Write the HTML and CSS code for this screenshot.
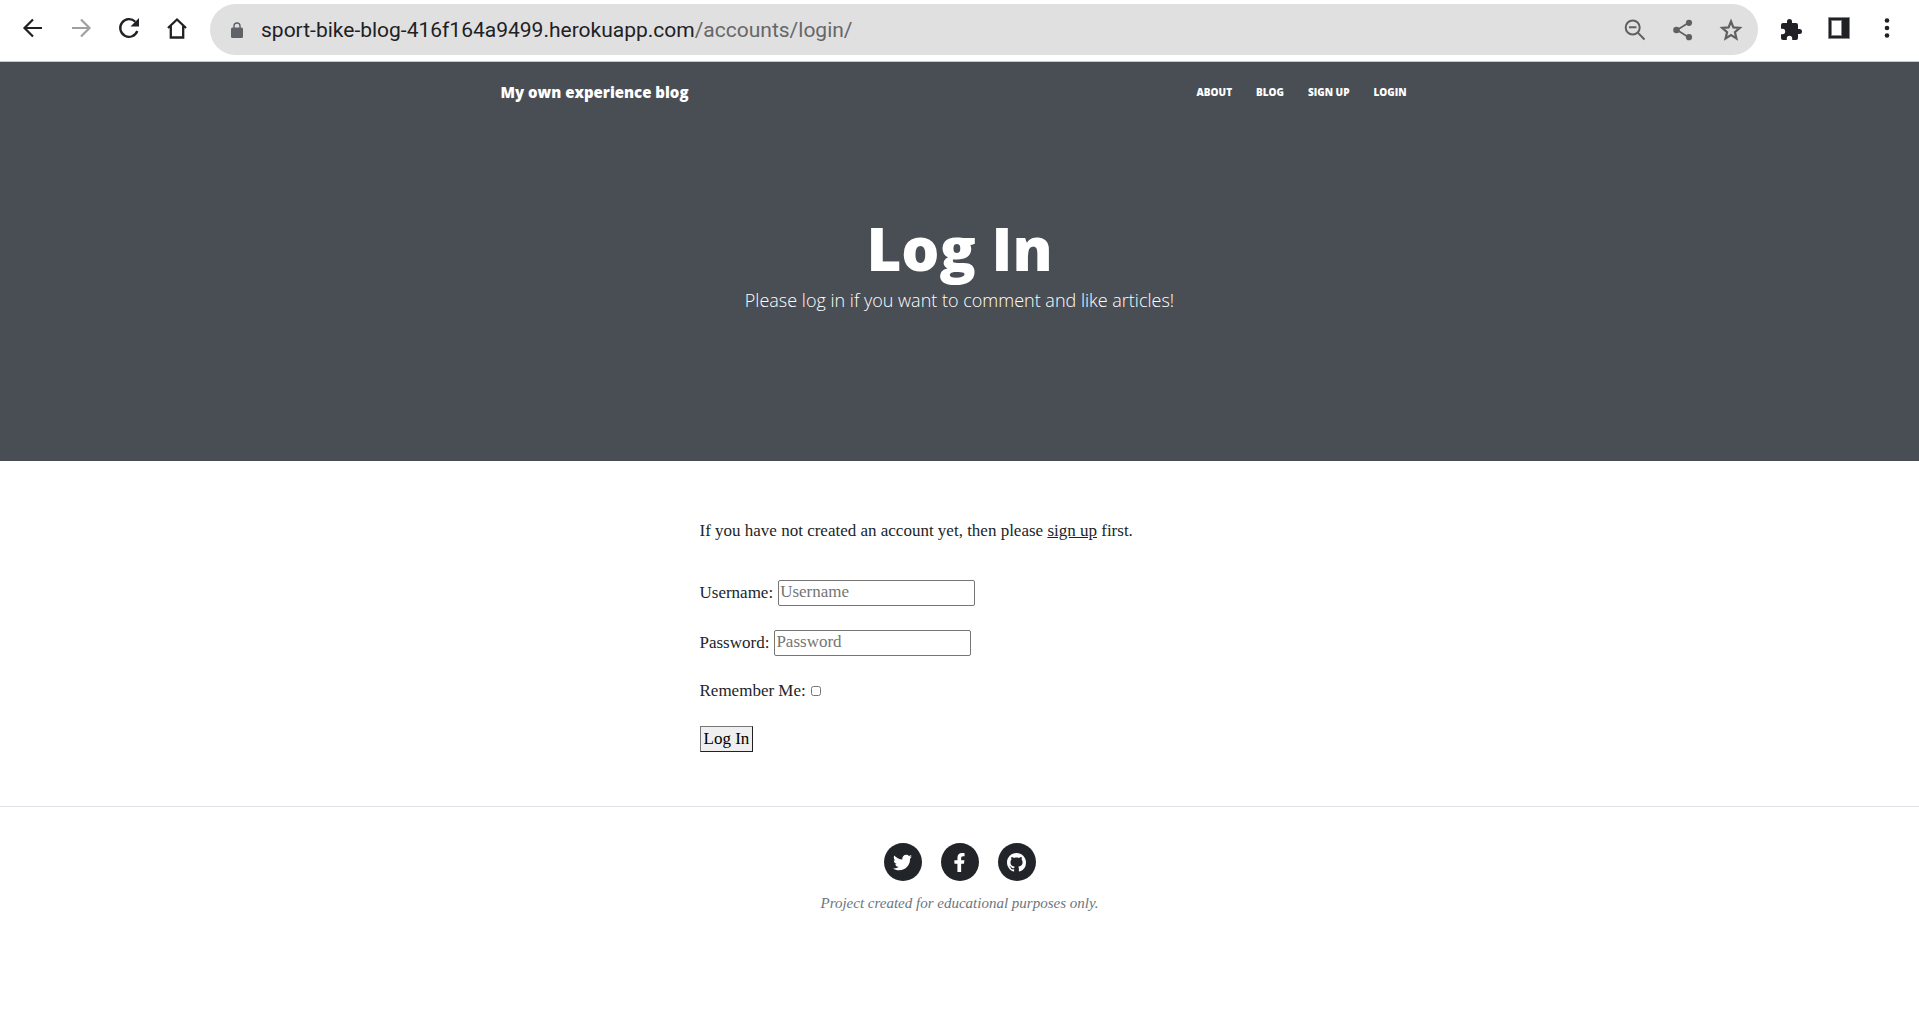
FILE: index.html
```html
<!DOCTYPE html>
<html lang="en">
<head>
<meta charset="utf-8">
<meta name="viewport" content="width=device-width, initial-scale=1">
<title>My own experience blog - Log In</title>
<link rel="stylesheet" href="styles.css">
</head>
<body>
<div class="toolbar">
  <button class="tool" aria-label="Back"><svg viewBox="0 0 24 24"><path d="M21 12H4M12 3.500 3.500 12l8.500 8.500" fill="none" stroke="currentColor" stroke-width="2.200"/></svg></button>
  <button class="tool tool-off" aria-label="Forward" disabled><svg viewBox="0 0 24 24"><path d="M3 12h17M12 3.500 20.500 12 12 20.500" fill="none" stroke="currentColor" stroke-width="2.200"/></svg></button>
  <button class="tool" aria-label="Reload"><svg viewBox="0 0 24 24"><path d="M20.300 15a8.800 8.800 0 1 1-2-9.200" fill="none" stroke="currentColor" stroke-width="2.300"/><path d="M22 2v8.500h-8.500z" fill="currentColor"/></svg></button>
  <button class="tool" aria-label="Home"><svg viewBox="0 0 24 24"><path d="M3 12 12 3.500 21 12M5.800 10v11.500h12.400V10" fill="none" stroke="currentColor" stroke-width="2.300"/></svg></button>
  <div class="address">
    <svg class="lock" viewBox="0 0 12 16" aria-hidden="true"><path d="M3 7V4a3 3 0 0 1 6 0v3" fill="none" stroke="currentColor" stroke-width="1.400"/><rect y="5.500" width="12" height="10.500" rx="1.500" fill="currentColor"/></svg>
    <span class="url">sport-bike-blog-416f164a9499.herokuapp.com<span class="path">/accounts/login/</span></span>
    <button class="tool tool-soft" aria-label="Zoom"><svg viewBox="0 0 24 24"><g fill="none" stroke="currentColor" stroke-width="2"><circle cx="9.700" cy="9.500" r="7"/><path d="m14.800 14.600 6.700 6.900M6 9.300h7.500"/></g></svg></button>
    <button class="tool tool-soft" aria-label="Share"><svg viewBox="0 0 24 24"><path d="M18 4.500 6 12l12 7.500" fill="none" stroke="currentColor" stroke-width="1.700"/><g fill="currentColor"><circle cx="18" cy="4.800" r="3.100"/><circle cx="5.500" cy="12" r="3.300"/><circle cx="18" cy="19.200" r="3.100"/></g></svg></button>
    <button class="tool tool-soft" aria-label="Bookmark"><svg viewBox="0 0 24 24"><path d="m12 3.500 2.400 5.900 6.400.5-4.900 4.200 1.500 6.300-5.400-3.400-5.400 3.400 1.500-6.300-4.900-4.200 6.400-.5z" fill="none" stroke="currentColor" stroke-width="2.200"/></svg></button>
  </div>
  <button class="tool tool-low" aria-label="Extensions"><svg viewBox="0 0 24 24"><path d="M20.500 11H19V7a2 2 0 0 0-2-2h-4V3.500a2.500 2.500 0 0 0-5 0V5H4a2 2 0 0 0-2 2v3.800h1.500a2.700 2.700 0 0 1 0 5.400H2V20a2 2 0 0 0 2 2h3.800v-1.500a2.700 2.700 0 0 1 5.400 0V22H17a2 2 0 0 0 2-2v-4h1.500a2.500 2.500 0 0 0 0-5z" fill="currentColor"/></svg></button>
  <button class="tool" aria-label="Side panel"><svg viewBox="0 0 24 24"><path d="M1.500 1.500h21v21h-21zM4.500 4.500v15h10v-15z" fill="currentColor" fill-rule="evenodd" stroke="#86868a"/></svg></button>
  <button class="tool" aria-label="Menu"><svg viewBox="0 0 24 24"><g fill="currentColor"><circle cx="12" cy="4.500" r="2.300"/><circle cx="12" cy="12" r="2.300"/><circle cx="12" cy="19.500" r="2.300"/></g></svg></button>
</div>

<header class="masthead">
  <nav class="nav">
    <a class="brand" href="#">My own experience blog</a>
    <ul class="links">
      <li><a href="#">About</a></li>
      <li><a href="#">Blog</a></li>
      <li><a href="#">Sign up</a></li>
      <li><a href="#">Login</a></li>
    </ul>
  </nav>
  <div class="heading">
    <h1>Log In</h1>
    <p>Please log in if you want to comment and like articles!</p>
  </div>
</header>

<main class="content">
  <p class="intro">If you have not created an account yet, then please <a href="#">sign up</a> first.</p>
  <form class="login">
    <div class="field"><label for="username">Username:</label><input class="text" id="username" type="text" placeholder="Username"></div>
    <div class="field"><label for="password">Password:</label><input class="text" id="password" type="password" placeholder="Password"></div>
    <div class="field"><label for="remember">Remember Me:</label><input class="check" id="remember" type="checkbox"></div>
    <button class="submit" type="submit">Log In</button>
  </form>
</main>

<footer class="footer">
  <ul class="social">
    <li><a href="#" aria-label="Twitter"><svg viewBox="0 0 512 512"><path fill="currentColor" d="M459.370 151.716c.325 4.548.325 9.097.325 13.645 0 138.720-105.583 298.558-298.558 298.558-59.452 0-114.680-17.219-161.137-47.106 8.447.974 16.568 1.299 25.340 1.299 49.055 0 94.213-16.568 130.274-44.832-46.132-.975-84.792-31.188-98.112-72.772 6.498.974 12.995 1.624 19.818 1.624 9.421 0 18.843-1.300 27.614-3.573-48.081-9.747-84.143-51.980-84.143-102.985v-1.299c13.969 7.797 30.214 12.670 47.431 13.319-28.264-18.843-46.781-51.005-46.781-87.391 0-19.492 5.197-37.360 14.294-52.954 51.655 63.675 129.300 105.258 216.365 109.807-1.624-7.797-2.599-15.918-2.599-24.040 0-57.828 46.782-104.934 104.934-104.934 30.213 0 57.502 12.670 76.670 33.137 23.715-4.548 46.456-13.320 66.599-25.340-7.798 24.366-24.366 44.833-46.132 57.827 21.117-2.273 41.584-8.122 60.426-16.243-14.292 20.791-32.161 39.308-52.628 54.253z"/></svg></a></li>
    <li><a href="#" aria-label="Facebook"><svg viewBox="0 0 320 512"><path fill="currentColor" d="M279.140 288l14.220-92.660h-88.910v-60.130c0-25.350 12.420-50.060 52.240-50.060h40.420V6.260S260.430 0 225.360 0c-73.220 0-121.080 44.380-121.080 124.720v70.620H22.890V288h81.390v224h100.170V288z"/></svg></a></li>
    <li><a href="#" aria-label="GitHub"><svg viewBox="0 0 16 16"><path fill="currentColor" d="M8 0C3.580 0 0 3.580 0 8c0 3.540 2.290 6.530 5.470 7.590.400.070.550-.170.550-.380 0-.190-.010-.820-.010-1.490-2.010.370-2.530-.490-2.690-.940-.090-.230-.480-.940-.820-1.130-.280-.150-.680-.520-.010-.530.630-.010 1.080.580 1.230.820.720 1.210 1.870.870 2.330.660.070-.520.280-.870.510-1.070-1.780-.200-3.640-.890-3.640-3.950 0-.870.310-1.590.820-2.150-.080-.200-.360-1.020.080-2.120 0 0 .670-.210 2.200.820.640-.180 1.320-.270 2-.270s1.360.090 2 .270c1.530-1.040 2.200-.820 2.200-.820.440 1.100.160 1.920.080 2.120.510.560.820 1.270.820 2.150 0 3.070-1.870 3.750-3.650 3.950.290.250.540.730.540 1.480 0 1.070-.010 1.930-.010 2.200 0 .210.150.460.550.380A8.010 8.010 0 0 0 16 8c0-4.420-3.580-8-8-8z"/></svg></a></li>
  </ul>
  <p class="note">Project created for educational purposes only.</p>
</footer>
</body>
</html>
```
FILE: styles.css
```css
* {
  box-sizing: border-box;
}

body {
  margin: 0;
  background: #fff;
  color: #212529;
  font-family: "Liberation Serif", serif;
  font-size: 17px;
  line-height: 24px;
}

h1, p, ul {
  margin: 0;
  padding: 0;
}

ul {
  display: flex;
  list-style: none;
}

button, input {
  font: inherit;
}

/* Browser toolbar */
.toolbar {
  display: flex;
  align-items: center;
  gap: 24px;
  padding: 4px 20px 6px 21px;
  border-bottom: 1px solid #c4cbcb;
}

.tool {
  display: flex;
  padding: 0 0 3px;
  border: 0;
  background: none;
  color: #202124;
}

.tool svg {
  width: 24px;
  height: 24px;
}

.tool-off {
  color: #a0a0a2;
}

.tool-soft {
  padding: 0;
  color: #5f6062;
}

.tool-low {
  padding: 0;
}

.address {
  display: flex;
  flex: 1;
  align-items: center;
  gap: 24px;
  height: 51px;
  margin: 0 -3px;
  padding: 0 15px 0 21px;
  border-radius: 26px;
  background: #e0e0e0;
}

.lock {
  width: 12px;
  height: 16px;
  color: #5f6368;
}

.url {
  flex: 1;
  margin-left: -6px;
  color: #202124;
  font-family: Roboto, sans-serif;
  font-size: 21px;
}

.path {
  color: #66676a;
}

/* Page header */
.masthead {
  height: 399px;
  background: #494d54;
  color: #fff;
  font-family: "Open Sans", sans-serif;
}

.nav {
  display: flex;
  align-items: center;
  justify-content: space-between;
  max-width: 942px;
  margin: 0 auto;
  padding: 18px 24px 18px 12px;
}

.nav a {
  color: inherit;
  text-decoration: none;
}

.brand {
  font-size: 15px;
  font-weight: 800;
}

.links {
  gap: 24px;
  font-size: 10px;
  font-weight: 800;
  text-transform: uppercase;
}

.heading {
  padding-top: 94px;
  text-align: center;
}

.heading h1 {
  font-size: 60px;
  font-weight: 800;
  line-height: 64px;
}

.heading p {
  margin-top: 2px;
  font-size: 18px;
  font-weight: 300;
  line-height: 36px;
}

/* Login form */
.content {
  max-width: 520px;
  margin: 0 auto;
  padding: 58px 0 54px;
}

.content a {
  color: inherit;
}

.login {
  display: flex;
  flex-direction: column;
  align-items: flex-start;
  gap: 24px;
  margin-top: 37px;
}

.field {
  display: flex;
  align-items: center;
  gap: 5px;
  line-height: 22px;
}

.text {
  width: 197px;
  height: 26px;
  padding: 0 1px 2px;
  border: 1px solid #767676;
  border-radius: 2px;
}

.text::placeholder {
  color: #757575;
}

.check {
  width: 10px;
  height: 10px;
  margin: 0;
}

.submit {
  height: 26px;
  padding: 0 3px;
  border: 1px solid;
  border-color: #767676 #212121 #212121 #767676;
  border-radius: 0;
  background: #efefef;
  color: #000;
  line-height: 22px;
}

/* Footer */
.footer {
  display: flex;
  flex-direction: column;
  align-items: center;
  gap: 10px;
  padding: 36px 0;
  border-top: 1px solid #dee2e6;
}

.social {
  gap: 19px;
}

.social a {
  display: flex;
  align-items: center;
  justify-content: center;
  width: 38px;
  height: 38px;
  border-radius: 50%;
  background: #212529;
  color: #fff;
}

.social svg {
  width: 19px;
  height: 19px;
}

.note {
  color: #6c757d;
  font-size: 15px;
  font-style: italic;
}
```
